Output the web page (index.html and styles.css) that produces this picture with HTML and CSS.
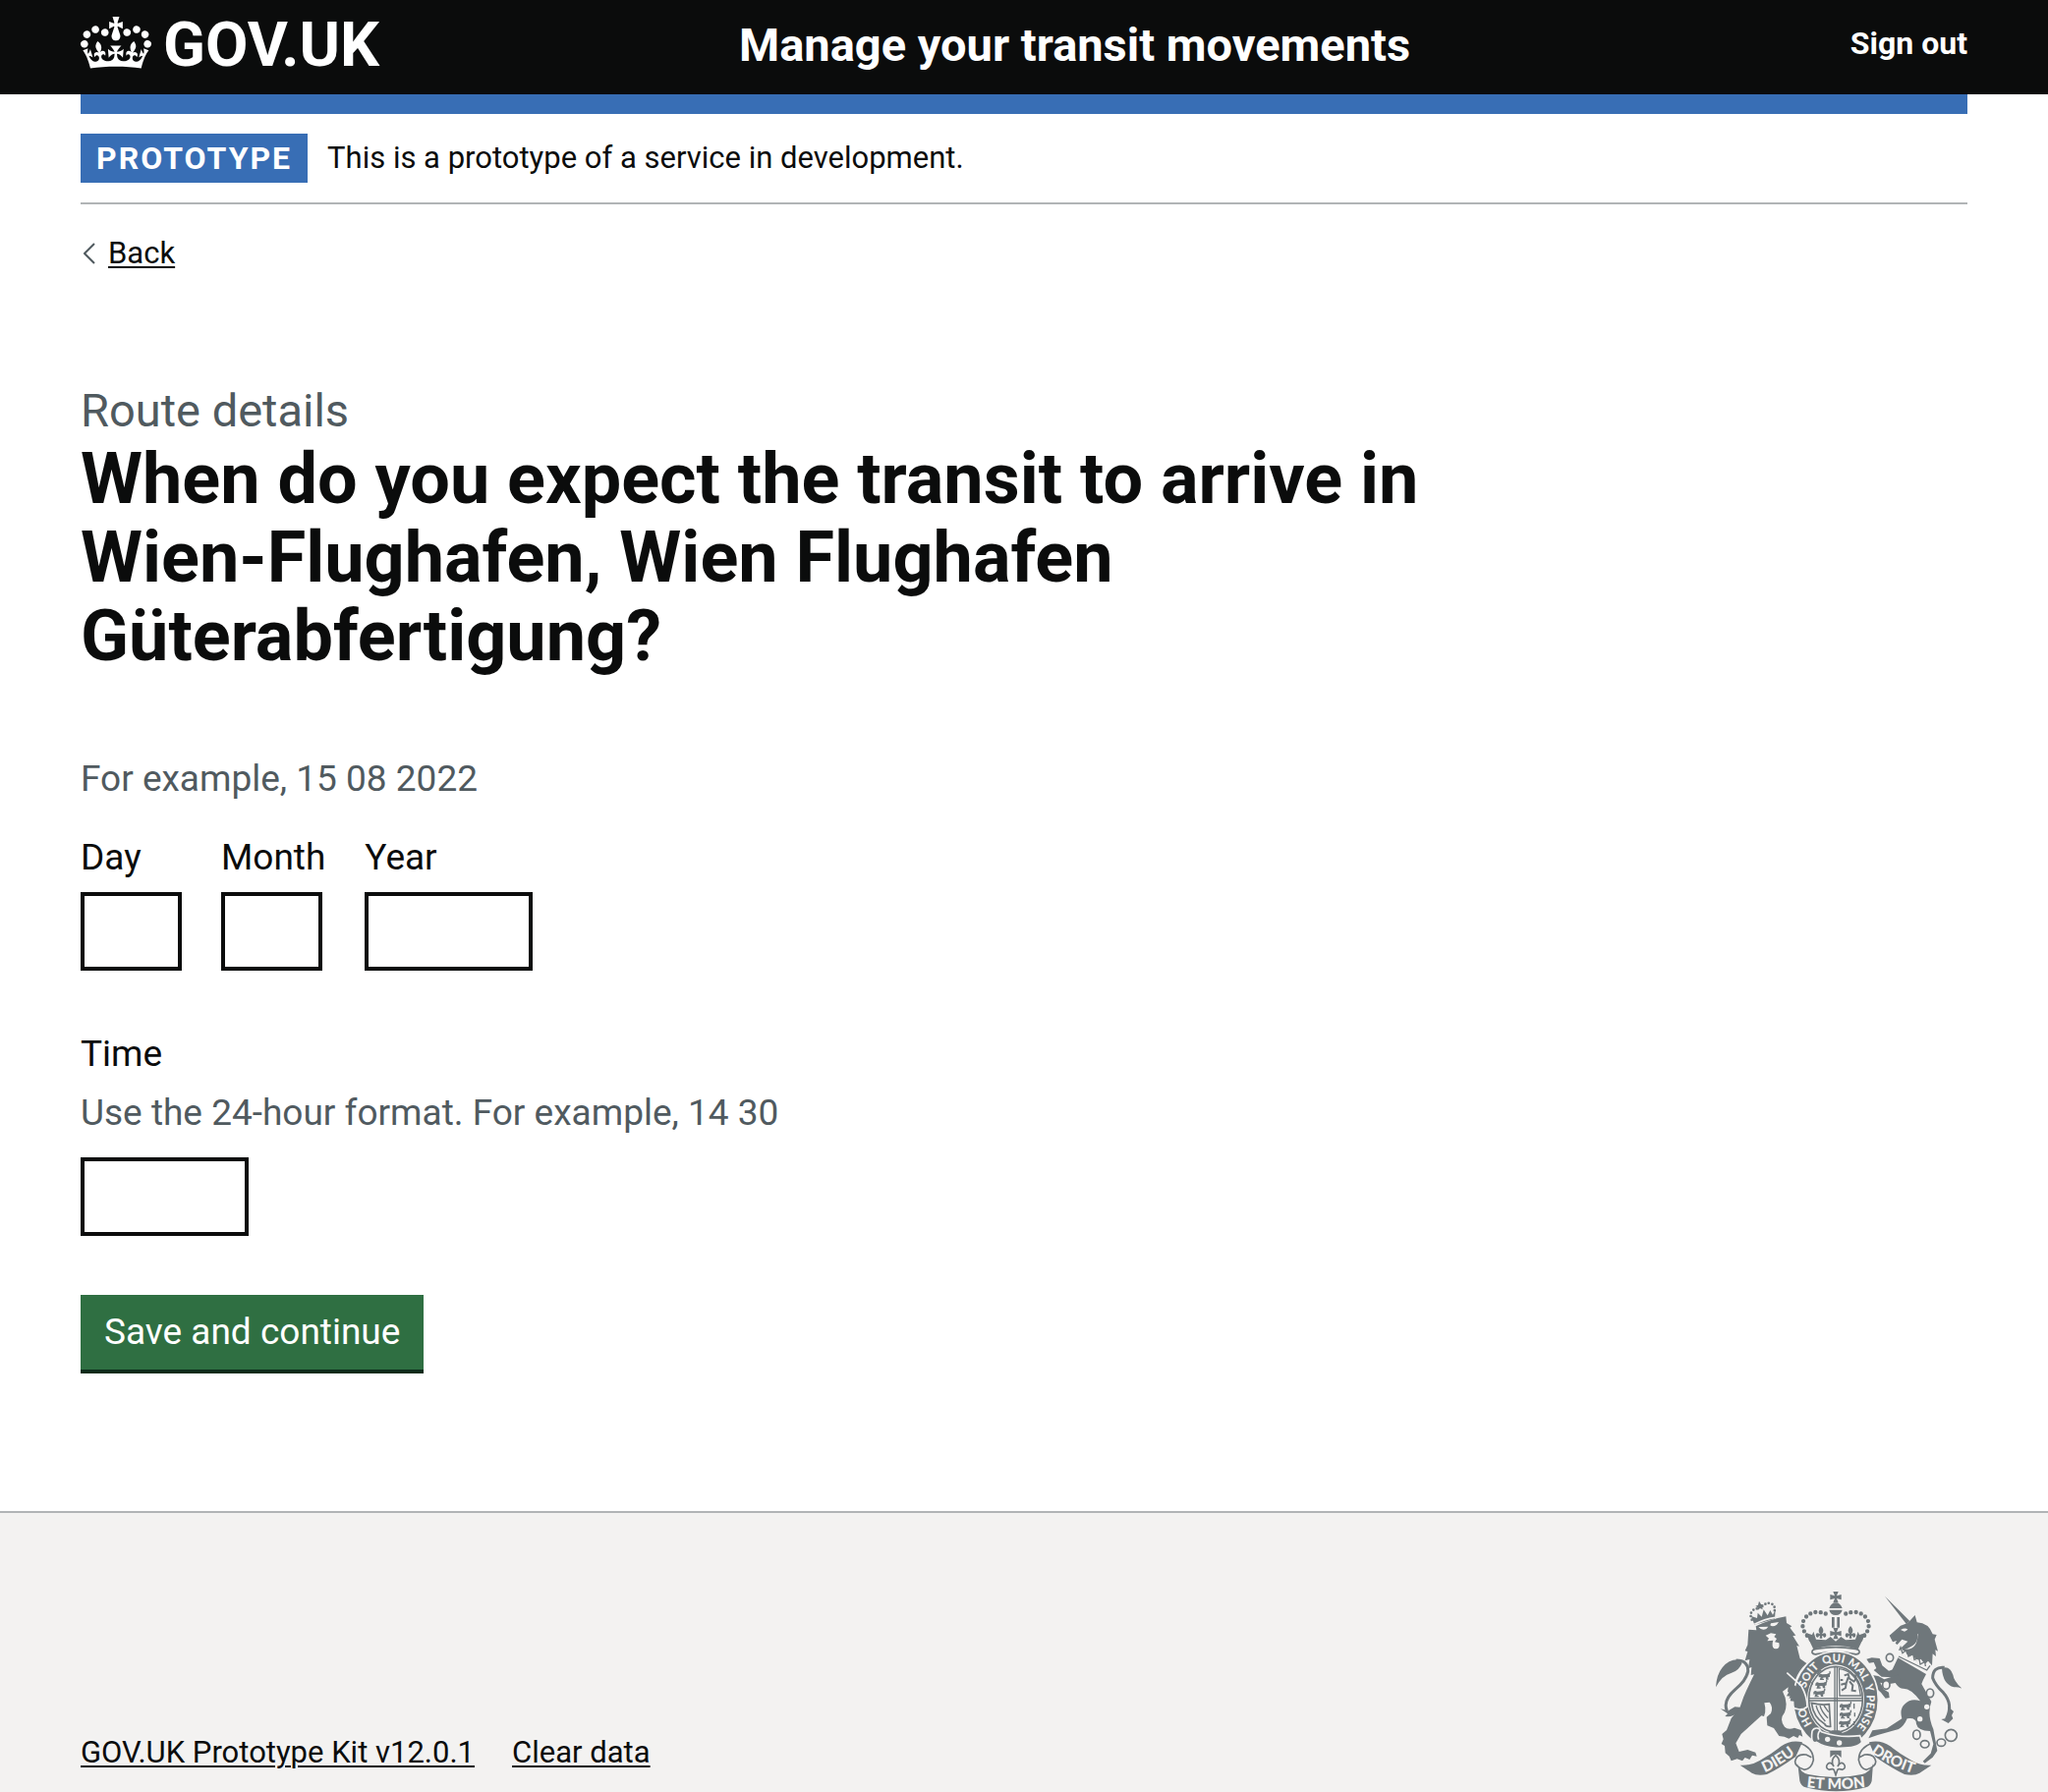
FILE: index.html
```html
<!DOCTYPE html>
<html lang="en">
<head>
  <meta charset="utf-8">
  <meta name="viewport" content="width=device-width, initial-scale=1">
  <title>When do you expect the transit to arrive? - Manage your transit movements - GOV.UK</title>
  <link rel="stylesheet" href="styles.css">
</head>
<body class="page">
  <header class="header">
    <div class="container header-row">
      <a class="logo" href="#">
        <svg class="logo-crown" viewBox="0 0 132 97" aria-hidden="true">
          <path fill="currentColor" fill-rule="evenodd" d="M25 30.2c3.5 1.5 7.7-.2 9.1-3.7 1.5-3.6-.2-7.8-3.9-9.2-3.6-1.4-7.6.3-9.1 3.9-1.4 3.5.3 7.5 3.9 9zM9 39.5c3.6 1.5 7.8-.2 9.2-3.7 1.5-3.6-.2-7.8-3.9-9.1-3.6-1.5-7.6.2-9.1 3.8-1.4 3.5.3 7.5 3.8 9zM4.4 57.2c3.5 1.5 7.7-.2 9.1-3.8 1.5-3.6-.2-7.7-3.9-9.1-3.5-1.5-7.6.3-9.1 3.8-1.4 3.5.3 7.6 3.9 9.1zm38.3-21.4c3.5 1.5 7.7-.2 9.1-3.8 1.5-3.6-.2-7.7-3.9-9.1-3.6-1.5-7.6.3-9.1 3.8-1.3 3.6.4 7.7 3.9 9.1zm64.4-5.6c-3.6 1.5-7.8-.2-9.1-3.7-1.5-3.6.2-7.8 3.8-9.2 3.6-1.4 7.7.3 9.2 3.9 1.3 3.5-.4 7.5-3.9 9zm15.9 9.3c-3.6 1.5-7.7-.2-9.1-3.7-1.5-3.6.2-7.8 3.7-9.1 3.6-1.5 7.7.2 9.2 3.8 1.5 3.5-.3 7.5-3.8 9zm4.7 17.7c-3.6 1.5-7.8-.2-9.2-3.8-1.5-3.6.2-7.7 3.9-9.1 3.6-1.5 7.7.3 9.2 3.8 1.3 3.5-.4 7.6-3.9 9.1zM89.3 35.8c-3.6 1.5-7.8-.2-9.2-3.8-1.4-3.6.2-7.7 3.9-9.1 3.6-1.5 7.7.3 9.2 3.8 1.4 3.6-.3 7.7-3.9 9.1zM69.7 17.7l8.9 4.7V9.3l-8.9 2.8c-.2-.3-.5-.6-.9-.9L72.4 0H59.6l3.5 11.2c-.3.3-.6.5-.9.9l-8.8-2.8v13.1l8.8-4.7c.3.3.6.7.9.9l-5 15.4v.1c-.2.8-.4 1.6-.4 2.4 0 4.1 3.1 7.5 7 8.1h.2c.3 0 .7.1 1 .1.4 0 .7 0 1-.1h.2c4-.6 7.1-4.1 7.1-8.1 0-.8-.1-1.7-.4-2.4V34l-5.1-15.4c.4-.2.7-.6 1-.9zM66 92.8c16.9 0 32.8 1.1 47.1 3.2 4-16.9 8.9-26.7 14-33.5l-9.6-3.4c1 4.9 1.1 7.2 0 10.2-1.5-1.4-3-4.3-4.2-8.7L108.6 76c2.8-2 5-3.2 7.5-3.3-4.4 9.4-10 11.9-13.6 11.2-4.3-.8-6.3-4.6-5.6-7.9 1-4.7 5.7-5.9 8-.5 4.3-8.7-3-11.4-7.6-8.8 7.1-7.2 7.9-13.5 2.1-21.1-8 6.1-8.1 12.3-4.5 20.8-4.7-5.4-12.1-2.5-9.5 6.2 3.4-5.2 7.9-2 7.2 3.1-.6 4.3-6.4 7.8-13.5 7.2-10.3-.9-10.9-8-11.2-13.8 2.5-.5 7.1 1.8 11 7.3L80.2 60c-4.1 4.4-8 5.3-12.3 5.4 1.4-4.4 8-11.6 8-11.6H55.5s6.4 7.2 7.9 11.6c-4.2-.1-8-1-12.3-5.4l1.4 16.4c3.9-5.5 8.5-7.7 10.9-7.3-.3 5.8-.9 12.8-11.1 13.8-7.2.6-12.9-2.9-13.5-7.2-.7-5 3.8-8.3 7.1-3.1 2.7-8.7-4.6-11.6-9.4-6.2 3.7-8.5 3.6-14.7-4.6-20.8-5.8 7.6-5 13.9 2.2 21.1-4.7-2.6-11.9.1-7.7 8.8 2.3-5.5 7.1-4.2 8.1.5.7 3.3-1.3 7.1-5.7 7.9-3.5.7-9-1.8-13.5-11.2 2.5.1 4.7 1.3 7.5 3.3l-4.7-15.4c-1.2 4.4-2.7 7.2-4.3 8.7-1.1-3-.9-5.3 0-10.2l-9.5 3.4c5 6.9 9.9 16.7 14 33.5 14.8-2.1 30.8-3.2 47.7-3.2z"/>
        </svg>
        <span>GOV.UK</span>
      </a>
      <div class="header-content">
        <a class="service-name" href="#">Manage your transit movements</a>
        <a class="sign-out" href="#">Sign out</a>
      </div>
    </div>
  </header>

  <div class="container">
    <div class="header-bar"></div>
    <div class="phase-banner">
      <strong class="tag">PROTOTYPE</strong>
      <span>This is a prototype of a service in development.</span>
    </div>
    <a class="back-link" href="#">
      <svg class="back-chevron" viewBox="0 0 12 22" aria-hidden="true"><path d="M11 1 1 11l10 10" fill="none" stroke="#505a5f" stroke-width="2"/></svg>
      <span class="underlined">Back</span>
    </a>

    <main class="main">
      <span class="caption">Route details</span>
      <h1 class="heading">When do you expect the transit to arrive in Wien-Flughafen, Wien Flughafen Güterabfertigung?</h1>

      <form class="form">
        <p class="hint" id="date-hint">For example, 15 08 2022</p>
        <div class="date" role="group" aria-describedby="date-hint">
          <div class="field"><label for="day">Day</label><input class="input input-2" id="day" type="text" inputmode="numeric"></div>
          <div class="field"><label for="month">Month</label><input class="input input-2" id="month" type="text" inputmode="numeric"></div>
          <div class="field"><label for="year">Year</label><input class="input input-4" id="year" type="text" inputmode="numeric"></div>
        </div>
        <div class="field time">
          <label for="time">Time</label>
          <p class="hint" id="time-hint">Use the 24-hour format. For example, 14 30</p>
          <input class="input input-4" id="time" type="text" aria-describedby="time-hint">
        </div>
        <button class="button" type="button">Save and continue</button>
      </form>
    </main>
  </div>

  <footer class="footer">
    <div class="container footer-row">
      <nav class="footer-links">
        <a class="underlined" href="#">GOV.UK Prototype Kit v12.0.1</a>
        <a class="underlined" href="#">Clear data</a>
      </nav>
      <svg class="crest" viewBox="48 60 750 612" role="img" aria-label="Royal coat of arms">
        <defs>
          <path id="garter-line" d="M414 503A95 114 0 0 1 414 275A95 114 0 0 1 414 503"/>
          <path id="dieu-line" d="M186 616Q240 598 300 548"/>
          <path id="droit-line" d="M518 548Q575 592 654 616"/>
          <path id="mon-line" d="M318 656Q414 670 512 656"/>
          <g id="passant"><path d="M0 5q5-7 11-2l14-1q7-5 9 2v6l-5 2 1 7h-7l-2-7-8 1-3 7H3l3-9-6 1z"/><path class="line-thin" d="M31 3q6-5 2-9M10 18h6"/></g>
          <g id="fleur"><path d="M0-19q-13 13-3 25-12-8-13 3 0 8 7 7 1-5 6-5l-1 8h8l-1-8q5 0 6 5 7 1 7-7-1-11-13-3 10-12-3-25z"/></g>
          <g id="patee"><path d="M-8-17H8L3-4l14-4V8L3 4l5 13H-8l5-13-14 4V-8l14 4z"/></g>
        </defs>

        <!-- lion -->
        <g class="ink">
          <path d="M148 176l24 2-2-12q40-20 92-30l2 20 16 10-6 4 18 24-9 1 20 32-8-2 10 40 20 14q-24 22-34 50l-27-23 40 42q26 40 21 68l-10-4-6 8-8-11-9 3 1-14-11 1 3-15-14 2 8-14-12-6 2-14-17 13q18 32 6 64-18 22 0 44 10 10 30 3l20 7 5 20-10-5-5 9-13-6-14 8-14-6-16-2-16-24-20-8-2-26-16-4-62 56-16 28 10 26 26-6 24 8 4 12-14-3-8 13-14-6-8 10-16-6-18 6-6-14-12-10-2-22-10-6 6-14-4-16 14-12 14-36 26-32 12-34q12-28 32-68l-10 2 2-24-10 4 4-28-14 4 8-28-8-2 8-18z"/>
          <path d="M48 352q2-38 20-60 20-26 50-24l10 10q-10 24-32 30-30 8-48 44z"/>
          <path d="M62 418l24 6 20-12 22 2-14 14q-12 16-38 13l8-8z"/>
          <path d="M156 135l10 26 62-18 2-28-8 16-8-14-8 16-12-18-6 22-12-12-2 16z"/>
          <path d="M180 89l6 10 8 1-5 6 2 9-8-4-7 6-1-9-6-4 8-3z"/>
        </g>
        <path class="line" d="M110 270q38 0 36 34-6 28-38 54-40 34-26 66"/>
        <path class="dots-small" d="M158 146q-8-16 2-28 10-8 22-6M190 105q14-14 28-8 14 8 8 26"/>
        <g class="paper">
          <path d="M178 168q10 12 24 6l6-7M214 163q8 6 20-2l6-8-24 4z"/>
          <path d="M200 194l16-7 16 3-6 8 8 6-6 10 13 3q4 18-10 18-12 0-10-18l2-8-18 2 5-8z"/>
          <path d="M196 400q10 32-10 58l30-26q8-20-4-34z"/>
        </g>
        <path class="line-paper" d="M166 160q30-16 64-21"/>

        <!-- unicorn -->
        <g class="ink">
          <path d="M564 74l76 76-10 10z"/>
          <path d="M578 194l34-30 22-8 22-24 6 22q36 2 48 36l12 2-6 14 10 36-8-4 2 20-10-8-2 36-12-14-10 10-12-16-14 6-10-18-16 4-8-18q-4 6-12-8l20-20-18-6-14 16-6-4 4-8-12 4z"/>
          <path d="M604 262l20 12 66 38q-10 18-14 30l30 54q-14 38 6 84l12 66-14 20-24 18-6-6 24-24 8-28-10-40q-38-2-42-22 0-20-28-16-10 24-26 32l-64 18-28 10 12-24 44-6 46-30q-8-30 8-44 20-20 48-10-28-40-54-38-12 0-24-20 0-20-12-28z"/>
          <path d="M606 292l-30 10-20-16-8-22-24-2-16 4 8 12 14-2 8 18-8 6 24 20 36 2 16-8z"/>
          <path d="M604 314l-42 14-18-10-24-4 8 14 4 22 20 18 14 18 12-2-2-16-16-10-10-20 28 4 36-6z"/>
          <path d="M738 294q24-10 34 20 2 18 27 42-12-6-24-4-34-8-37-58z"/>
          <path d="M756 410l18 16-6 12 4 10-14 14-22-12 12-2 8-12z"/>
        </g>
        <path class="line" d="M746 292q-36-4-36 32 8 22 32 44 32 36 10 80"/>
        <path class="paper" d="M612 177q14-8 22-1l-10 6zM663 190q6 34-38 46 38 4 40-46z"/>
        <path class="line-paper" d="M608 232l10 16 90 44"/>
        <path class="line-thin" d="M606 258l86 42 10-14M608 240l4-10 6 18 12-10 6 20 14-8 4 18 14-6 4 20 14-8 2 14"/>
        <g class="ring">
          <ellipse cx="579" cy="262" rx="11" ry="12"/><ellipse cx="568" cy="345" rx="11" ry="13"/>
          <ellipse cx="702" cy="370" rx="11" ry="13"/><ellipse cx="661" cy="497" rx="11" ry="14"/>
          <ellipse cx="686" cy="526" rx="13" ry="11"/><ellipse cx="736" cy="521" rx="13" ry="11"/>
          <circle cx="766" cy="499" r="18"/>
        </g>
        <g class="paper"><circle cx="692" cy="412" r="8"/><circle cx="671" cy="449" r="8"/></g>

        <!-- crown -->
        <g class="ink">
          <use href="#patee" x="414" y="77"/>
          <path d="M394 111q6-17 20-17t20 17zM394 116h40q-4 16-20 16t-20-16z"/>
          <path d="M402 138h8v32h-8zM418 138h8v32h-8z"/>
          <use href="#fleur" x="369" y="184"/><use href="#fleur" x="459" y="184"/><use href="#patee" x="414" y="188"/>
          <path d="M322 186l20 6 4-10 8 24 30 2 14-10 16 14 16-14 14 10 30-2 8-24 4 10 20-6-24 50q-68-22-136 0z"/>
        </g>
        <path class="dots" d="M338 206q-36-32-20-62 24-34 72-14"/>
        <path class="dots" d="M490 206q36-32 20-62-24-34-72-14"/>
        <path class="ring" d="M342 247q-2-10 12-12 60-10 120 0 14 2 12 12-4 6-14 4-58-12-116 0-10 2-14-4z"/>

        <!-- garter and shield -->
        <ellipse class="halo" cx="414" cy="391" rx="130" ry="148"/>
        <ellipse class="paper" cx="414" cy="389" rx="87" ry="106"/>
        <g class="garter-text">
          <text><textPath href="#garter-line" startOffset="17%">HO</textPath></text>
          <text><textPath href="#garter-line" startOffset="36%">SOIT</textPath></text>
          <text><textPath href="#garter-line" startOffset="49%">QUI</textPath></text>
          <text><textPath href="#garter-line" startOffset="61%">MAL</textPath></text>
          <text><textPath href="#garter-line" startOffset="70%">Y</textPath></text>
          <text><textPath href="#garter-line" startOffset="81%">PENSE</textPath></text>
        </g>
        <ellipse class="ring" cx="414" cy="389" rx="82" ry="100"/>
        <path class="line-thin" d="M411 288v198M418 288v198M333 386h162M333 393h162"/>
        <g class="ink">
          <use href="#passant" x="362" y="310"/><use href="#passant" x="352" y="336"/><use href="#passant" x="346" y="362"/>
          <use href="#passant" x="426" y="402"/><use href="#passant" x="426" y="428"/><use href="#passant" x="424" y="454"/>
        </g>
        <path class="line-lion" d="M440 316l12-4 4 14 16 10M452 322l-6 18-16 4M456 334l10 12-2 16 12 2M446 340l-2 14-12 8M470 334q10-10 2-20M436 330h-8"/>
        <path class="line-thin" d="M424 296q40 4 60 48l6 34h-64zM358 312q4-10 12-12M342 336v8M470 402v16M472 430v12M470 456v12"/>
        <path class="ring" d="M340 400q30 8 54 4l4 68q-14 2-18-8-34-20-40-64z"/>
        <path class="line-thin" d="M354 408q6 24 28 48M366 408q4 18 24 38M378 408l14 20"/>
        <path class="ink" d="M404 484h20l14 10-8 10h-34l-8-10z"/>
        <!-- lion's paw over the garter -->
        <path class="ink" d="M266 330l36 26q22 34 20 58l-10-6-8 8-6-9-11 3 0-15-12-1 3-14-14-1 8-14z"/>
        <path class="line-paper" d="M265 308l44 40q18 32 18 64l-10 6-14 2-18-4"/>
        <path class="halo" d="M342 486q6-12 20-8l8 10q56 20 118 12l6 20q-14 20-78 18-40-4-60-18-20 8-14-34z"/>
        <g class="paper"><circle cx="389" cy="511" r="8"/><circle cx="425" cy="522" r="8"/></g>
        <path class="line-paper" d="M366 484q-10 12-4 28"/>

        <!-- badge and motto ribbon -->
        <path class="ink" d="M397 545h34v22q-17-20-34 0z"/>
        <path class="ring" d="M414 560q-18 16-6 34-8-16-18-8-10 12 4 18 14-6 16 4l4 12 4-12q2-10 16-4 14-6 4-18-10-8-18 8 12-18-6-34z"/>
        <g class="ring">
          <path d="M304 522q42 16 42 52-6 28-28 30-30-10-28-26 4-24 34-20l16 8"/>
          <path d="M526 522q-42 16-42 52 6 28 24 30 30-10 28-26-4-24-34-20l-16 8"/>
        </g>
        <g class="ink">
          <path d="M122 590q34 2 60-14 36-20 66-44 28-20 64-12l-20 44q-50 36-88 54-30 6-46-4-12-8-36-24z"/>
          <path d="M706 590q-34 2-60-14-36-20-66-44-28-20-64-12l18 44q52 36 90 54 30 6 46-4 12-8 36-24z"/>
          <path d="M298 586q8 28 32 32 84 18 164 0 26-6 34-32l-4 52q-4 16-18 20-90 24-184 0-14-4-18-20z"/>
        </g>
        <g class="ribbon-text">
          <text><textPath href="#dieu-line" startOffset="50%">DIEU</textPath></text>
          <text><textPath href="#droit-line" startOffset="50%">DROIT</textPath></text>
          <text><textPath href="#mon-line" startOffset="50%">ET MON</textPath></text>
        </g>
      </svg>
    </div>
  </footer>
</body>
</html>
```
FILE: styles.css
```css
*,
*::before,
*::after {
  box-sizing: border-box;
}

.page {
  display: flex;
  flex-direction: column;
  min-height: 100vh;
  margin: 0;
  background: #fff;
  color: #0b0c0c;
  font-family: Roboto, "Liberation Sans", sans-serif;
  font-size: 37px;
  line-height: 50px;
}

.container {
  width: calc(100% - 60px);
  max-width: 1920px;
  margin: 0 auto;
}

a {
  color: inherit;
  text-decoration: none;
}

.underlined {
  text-decoration: underline;
  text-decoration-thickness: 2px;
  text-underline-offset: 3px;
}

/* Header */
.header {
  background: #0b0c0c;
  color: #fff;
}

.header-row {
  display: grid;
  grid-template-columns: 1fr 2fr;
  min-height: 96px;
}

.logo {
  display: flex;
  align-items: flex-start;
  gap: 12px;
  padding-top: 15px;
  font-size: 63px;
  font-weight: 700;
  line-height: 62px;
}

.logo-crown {
  width: 72px;
  height: 53px;
  margin-top: 2px;
}

.header-content {
  display: flex;
  justify-content: space-between;
  padding: 16px 0 16px 30px;
}

.service-name {
  font-size: 47px;
  font-weight: 700;
  line-height: 60px;
}

.sign-out {
  font-size: 32px;
  font-weight: 700;
  line-height: 56px;
}

.header-bar {
  height: 20px;
  background: #386eb5;
}

/* Phase banner and back link */
.phase-banner {
  display: flex;
  align-items: center;
  gap: 20px;
  padding: 20px 0;
  border-bottom: 2px solid #b1b4b6;
  font-size: 31px;
}

.tag {
  padding: 0 16px;
  background: #386eb5;
  color: #fff;
  font-size: 32px;
  font-weight: 700;
  letter-spacing: 2px;
}

.back-link {
  display: flex;
  align-items: center;
  gap: 13px;
  width: fit-content;
  margin-top: 30px;
  padding-left: 3px;
  font-size: 31px;
  line-height: 40px;
}

.back-chevron {
  width: 12px;
  height: 22px;
}

/* Question */
.main {
  padding: 110px 0 140px;
}

.caption {
  display: block;
  color: #505a5f;
  font-size: 47px;
  line-height: 60px;
}

.heading {
  max-width: 1410px;
  margin: 0 0 80px;
  font-size: 72px;
  font-weight: 700;
  line-height: 80px;
}

.form {
  display: flex;
  flex-direction: column;
  align-items: flex-start;
}

.hint {
  margin: 0;
  color: #505a5f;
}

.date {
  display: flex;
  flex-wrap: wrap;
  gap: 40px;
  margin: 30px 0 60px;
}

.field {
  display: flex;
  flex-direction: column;
  align-items: flex-start;
  gap: 10px;
}

.time {
  margin-bottom: 60px;
}

.time .input {
  margin-top: 10px;
}

.input {
  height: 80px;
  padding: 10px;
  border: 4px solid #0b0c0c;
  border-radius: 0;
  background: #fff;
  color: inherit;
  font: inherit;
}

.input-2 {
  width: 103px;
}

.input-4 {
  width: 171px;
}

.button {
  height: 76px;
  margin-bottom: 4px;
  padding: 0 24px;
  border: 0;
  background: #2f6f42;
  box-shadow: 0 4px 0 #0e2c1b;
  color: #fff;
  font: inherit;
}

/* Footer */
.footer {
  flex: 1;
  padding-top: 80px;
  border-top: 2px solid #b1b4b6;
  background: #f3f2f1;
  font-size: 31px;
  line-height: 40px;
}

.footer-row {
  display: flex;
  justify-content: space-between;
  align-items: flex-end;
  padding-right: 6px;
}

.footer-links {
  display: flex;
  gap: 38px;
  padding-bottom: 20px;
}

/* Coat of arms */
.crest {
  display: block;
  width: 250px;
  height: 204px;
  color: #6f777b;
}

.ink {
  fill: currentColor;
}

.paper {
  fill: #f3f2f1;
}

.line,
.line-thin,
.line-lion,
.line-paper,
.ring {
  fill: none;
  stroke: currentColor;
  stroke-width: 9;
}

.line-thin {
  stroke-width: 4;
}

.line-lion {
  stroke-width: 6;
}

.line-paper {
  stroke: #f3f2f1;
  stroke-width: 5;
}

.ring {
  fill: #f3f2f1;
  stroke-width: 5;
}

ellipse.ring {
  fill: none;
}

.dots,
.dots-small {
  fill: none;
  stroke: currentColor;
  stroke-linecap: round;
  stroke-width: 13;
  stroke-dasharray: 0 16;
}

.dots-small {
  stroke-width: 8;
  stroke-dasharray: 0 11;
}

.halo {
  fill: currentColor;
  stroke: #f3f2f1;
  stroke-width: 5;
}

.garter-text,
.ribbon-text {
  fill: #f3f2f1;
  font-family: Lato, "Liberation Sans", sans-serif;
  font-size: 34px;
  font-weight: 900;
  text-anchor: middle;
}

.ribbon-text {
  font-size: 46px;
}
```
